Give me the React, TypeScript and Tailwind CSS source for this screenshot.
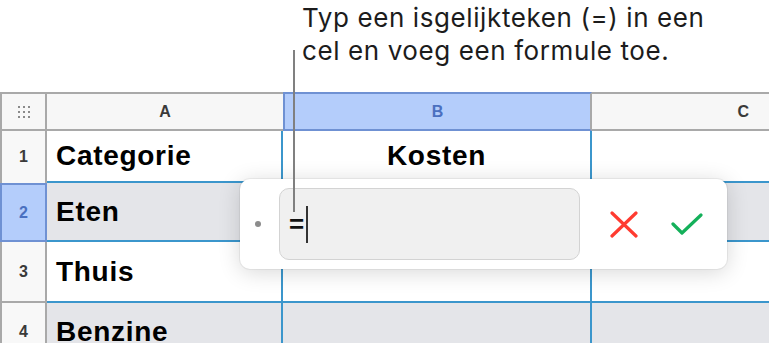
import React from 'react';

const gray = 'border-[#a9a9a9]';
const blue = 'border-[#3b96cc]';

const rows = [
  { n: '1', label: 'Categorie', b: 'Kosten', bg: 'bg-white' },
  { n: '2', label: 'Eten', b: '', bg: 'bg-[#e4e5e9]' },
  { n: '3', label: 'Thuis', b: '', bg: 'bg-white' },
  { n: '4', label: 'Benzine', b: '', bg: 'bg-[#e4e5e9]' },
];

const cellText = "font-['Liberation_Sans',Arial,sans-serif] text-[28px] font-bold tracking-[0.7px] text-black";

function CornerDots() {
  return (
    <div className="grid grid-cols-3 gap-[3px]">
      {Array.from({ length: 9 }).map((_, i) => (
        <span key={i} className="h-[2px] w-[2px] bg-[#8a8a8a]" />
      ))}
    </div>
  );
}

function RowHeader({ n, index }: { n: string; index: number }) {
  if (n === '2') {
    return (
      <div className="flex items-center justify-center border-2 border-[#6f91d3] bg-[#b4cdfb] text-[16px] font-bold text-[#4a70c0]">
        {n}
      </div>
    );
  }
  return (
    <div
      className={`flex items-center justify-center border-x-2 ${index === 0 ? 'border-b-0' : 'border-b-2'} ${gray} bg-[#f8f8f8] text-[16px] font-bold text-[#3a3a3a]`}
    >
      {n}
    </div>
  );
}

export default function App() {
  return (
    <div className="relative h-[343px] w-[769px] overflow-hidden bg-white font-['Liberation_Sans',Arial,sans-serif]">
      <div className="h-[92px] pl-[302px] pt-[1px] font-['Inter',sans-serif] text-[26px] leading-[33px] tracking-[0.6px] text-[#1c1c1c]">
        <p>Typ een isgelijkteken (=) in een</p>
        <p>cel en voeg een formule toe.</p>
      </div>

      <div className="grid grid-cols-[47px_236px_309px_1fr] grid-rows-[39px_52px_59px_61px_60px]">
        <div className={`flex items-center justify-center border-2 ${gray} bg-[#f7f7f7]`}>
          <CornerDots />
        </div>
        <div className={`flex items-center justify-center border-y-2 ${gray} bg-[#f7f7f7] text-[16px] font-bold text-[#3a3a3a]`}>
          A
        </div>
        <div className="flex items-center justify-center border-2 border-[#6f91d3] border-r-[#a9a9a9] bg-[#b4cdfb] text-[16px] font-bold text-[#4a70c0]">
          B
        </div>
        <div className={`flex items-center justify-end border-y-2 ${gray} bg-[#f7f7f7] pr-[20px] text-[16px] font-bold text-[#3a3a3a]`}>
          C
        </div>

        {rows.map((r, i) => (
          <React.Fragment key={r.n}>
            <RowHeader n={r.n} index={i} />
            <div className={`flex items-center border-r-2 border-b-2 ${blue} ${r.bg} pl-[9px] ${cellText}`}>
              {r.label}
            </div>
            <div className={`flex items-center justify-center border-r-2 border-b-2 ${blue} ${r.bg} ${cellText}`}>
              {r.b}
            </div>
            <div className={`border-b-2 ${blue} ${r.bg}`} />
          </React.Fragment>
        ))}
      </div>

      {/* formula editor popover */}
      <div className="absolute left-[240px] top-[179px] flex h-[90px] w-[487px] items-center rounded-[10px] bg-white pl-[15px] shadow-[0_3px_22px_rgba(0,0,0,0.16)] ring-1 ring-black/5">
        <span className="h-[6px] w-[6px] rounded-full bg-[#8c8c8c]" />
        <div className="ml-[18px] flex h-[72px] w-[301px] items-center rounded-[10px] border-[1.5px] border-[#d3d3d3] bg-[#f0f0f0] pl-[9px]">
          <span className="text-[26px] font-bold leading-none text-[#111]">=</span>
          <span className="ml-[2px] h-[37px] w-[2px] bg-[#333]" />
        </div>
        <svg className="ml-[30px]" width="28" height="27" viewBox="0 0 28 27">
          <path d="M2 2 L26 25 M26 2 L2 25" stroke="#ff3b30" strokeWidth="3.2" strokeLinecap="round" fill="none" />
        </svg>
        <svg className="ml-[33px]" width="32" height="24" viewBox="0 0 32 24">
          <path d="M2 12 L11 21 L30 3" stroke="#14b05a" strokeWidth="3.2" strokeLinecap="round" strokeLinejoin="round" fill="none" />
        </svg>
      </div>

      {/* callout line */}
      <div className="absolute left-[293px] top-[50px] h-[162px] w-[2px] bg-[#808080]" />
    </div>
  );
}
